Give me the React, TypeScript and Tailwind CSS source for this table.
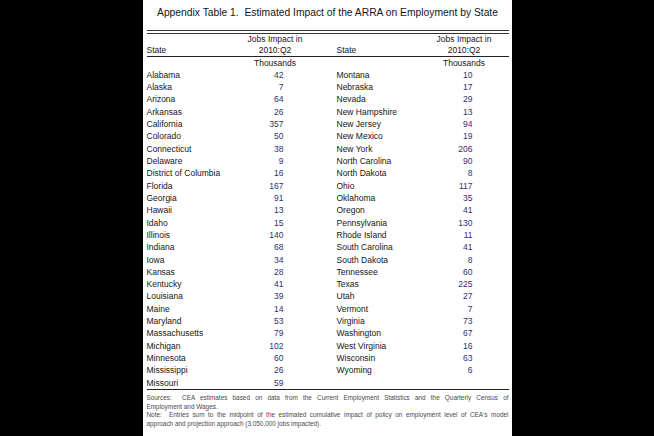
const left: [string, number][] = [
  ["Alabama", 42],
  ["Alaska", 7],
  ["Arizona", 64],
  ["Arkansas", 26],
  ["California", 357],
  ["Colorado", 50],
  ["Connecticut", 38],
  ["Delaware", 9],
  ["District of Columbia", 16],
  ["Florida", 167],
  ["Georgia", 91],
  ["Hawaii", 13],
  ["Idaho", 15],
  ["Illinois", 140],
  ["Indiana", 68],
  ["Iowa", 34],
  ["Kansas", 28],
  ["Kentucky", 41],
  ["Louisiana", 39],
  ["Maine", 14],
  ["Maryland", 53],
  ["Massachusetts", 79],
  ["Michigan", 102],
  ["Minnesota", 60],
  ["Mississippi", 26],
  ["Missouri", 59],
];

const right: [string, number][] = [
  ["Montana", 10],
  ["Nebraska", 17],
  ["Nevada", 29],
  ["New Hampshire", 13],
  ["New Jersey", 94],
  ["New Mexico", 19],
  ["New York", 206],
  ["North Carolina", 90],
  ["North Dakota", 8],
  ["Ohio", 117],
  ["Oklahoma", 35],
  ["Oregon", 41],
  ["Pennsylvania", 130],
  ["Rhode Island", 11],
  ["South Carolina", 41],
  ["South Dakota", 8],
  ["Tennessee", 60],
  ["Texas", 225],
  ["Utah", 27],
  ["Vermont", 7],
  ["Virginia", 73],
  ["Washington", 67],
  ["West Virginia", 16],
  ["Wisconsin", 63],
  ["Wyoming", 6],
];

const cols = "grid grid-cols-[101px_55px_34px_100px_55px_17px]";

function Num({ v }: { v?: number }) {
  return (
    <div className="pr-[19px] text-right text-[#2f2f6a]">{v ?? ""}</div>
  );
}

export default function App() {
  return (
    <div
      className="flex h-[436px] w-full justify-center bg-black"
      style={{ fontFamily: '"Liberation Sans", Arial, sans-serif' }}
    >
      <div className="w-[369px] bg-white pl-[4px] pr-[3px] text-[#151515]">
        <div className="pt-[6px] text-center text-[10.3px] leading-[14px] whitespace-pre">
          {"Appendix Table 1.  Estimated Impact of the ARRA on Employment by State"}
        </div>

        <div className="mt-[10px] border-t border-[#333]" />
        <div className="mt-[1.5px] border-t border-[#333]" />

        <div className={`${cols} text-[8.5px] leading-[11px]`}>
          <div className="flex items-end">State</div>
          <div className="text-center">
            Jobs Impact in
            <br />
            2010:Q2
          </div>
          <div />
          <div className="flex items-end">State</div>
          <div className="text-center">
            Jobs Impact in
            <br />
            2010:Q2
          </div>
          <div />
        </div>
        <div className="border-t border-[#222]" />

        <div className={`${cols} text-[8.5px] leading-[12.32px]`}>
          <div />
          <div className="text-center">Thousands</div>
          <div />
          <div />
          <div className="text-center">Thousands</div>
          <div />
          {left.map(([name, v], i) => {
            const r = right[i];
            return (
              <div key={name} className="contents">
                <div className="whitespace-nowrap">{name}</div>
                <Num v={v} />
                <div />
                <div className="whitespace-nowrap">{r ? r[0] : ""}</div>
                <Num v={r ? r[1] : undefined} />
                <div />
              </div>
            );
          })}
        </div>
        <div className="border-t border-[#222]" />

        <div className="mt-[4px] text-[6.4px] leading-[8.6px] text-[#4a4a4a]">
          <div className="whitespace-pre text-justify [text-align-last:justify]">
            {"Sources:  CEA estimates based on data from the Current Employment Statistics and the Quarterly Census of"}
          </div>
          <div>Employment and Wages.</div>
          <div className="whitespace-pre text-justify [text-align-last:justify]">
            {"Note:  Entries sum to the midpoint of the estimated cumulative impact of policy on employment level of CEA's model"}
          </div>
          <div>approach and projection approach (3,050,000 jobs impacted).</div>
        </div>
      </div>
    </div>
  );
}
